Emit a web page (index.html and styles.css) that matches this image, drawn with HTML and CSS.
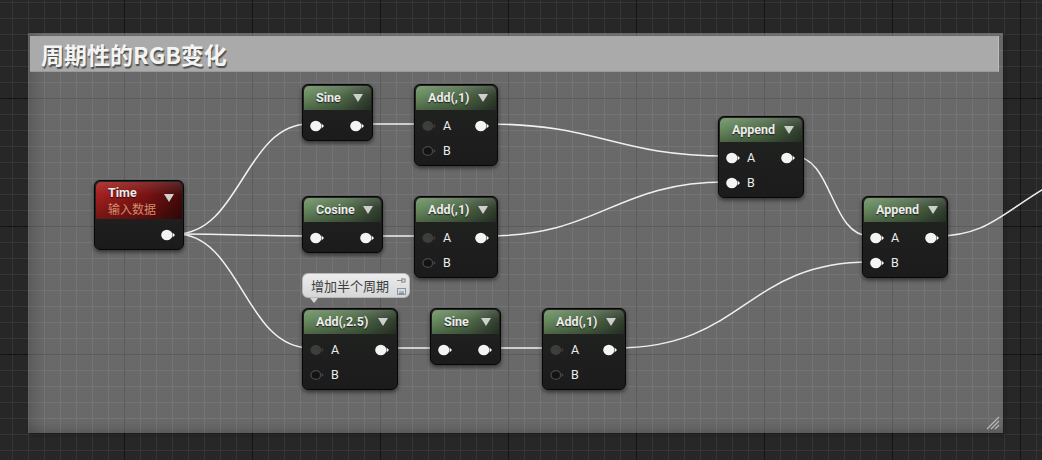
FILE: index.html
```html
<!DOCTYPE html>
<html lang="zh">
<head>
    <meta charset="UTF-8">
    <title>Material Graph</title>
    <link rel="stylesheet" href="styles.css">
</head>
<body>
    <svg class="defs" width="0" height="0">
        <symbol id="pin-on" viewBox="0 0 14 12">
            <ellipse cx="5.8" cy="6" rx="5.6" ry="5.2" fill="#f4f4f4"/>
            <path d="M11.6 3.4 L14 6 L11.6 8.6 Z" fill="#f4f4f4"/>
        </symbol>
        <symbol id="pin-dim" viewBox="0 0 14 12">
            <ellipse cx="5.8" cy="6" rx="5.4" ry="5" fill="#3c3d3c"/>
            <path d="M11.6 3.6 L13.8 6 L11.6 8.4 Z" fill="#3c3d3c"/>
        </symbol>
        <symbol id="pin-off" viewBox="0 0 14 12">
            <ellipse cx="5.8" cy="6" rx="4.8" ry="4.4" fill="#121312" stroke="#474847" stroke-width="1.3"/>
            <path d="M11.6 3.9 L13.6 6 L11.6 8.1 Z" fill="#474847"/>
        </symbol>
    </svg>

    <div class="graph">
        <div class="comment">
            <div class="comment-title">周期性的RGB变化</div>
            <svg class="grip" width="14" height="14" viewBox="0 0 14 14">
                <path d="M1 13 L13 1 M5 13 L13 5 M9 13 L13 9" stroke="#b8b8b8" stroke-width="1.2"/>
            </svg>
        </div>

        <svg class="wires" width="1042" height="460" viewBox="0 0 1042 460">
            <path d="M176 234 C240 234, 245 124, 309 124"/>
            <path d="M176 234 C240 234, 245 236, 309 236"/>
            <path d="M176 234 C240 234, 245 348, 310 348"/>
            <path d="M362 124 L422 124"/>
            <path d="M488 124 C600 124, 615 156, 726 156"/>
            <path d="M373 236 L422 236"/>
            <path d="M488 236 C600 236, 615 182, 726 182"/>
            <path d="M793 156 C833 156, 830 236, 870 236"/>
            <path d="M387 348 L437 348"/>
            <path d="M491 348 L550 348"/>
            <path d="M616 348 C745 348, 745 262, 870 262"/>
            <path d="M937 236 C985 236, 1000 215, 1045 188"/>
        </svg>

        <div class="node n-time">
            <div class="node-head head-red">
                <div class="head-text">
                    <span class="node-title">Time</span>
                    <span class="node-sub">输入数据</span>
                </div>
                <span class="caret"></span>
            </div>
            <div class="node-body">
                <div class="pin-row row-end">
                    <svg class="pin"><use href="#pin-on"/></svg>
                </div>
            </div>
        </div>

        <div class="node n-sine1">
            <div class="node-head"><span class="node-title">Sine</span><span class="caret"></span></div>
            <div class="node-body">
                <div class="pin-row">
                    <svg class="pin"><use href="#pin-on"/></svg>
                    <svg class="pin"><use href="#pin-on"/></svg>
                </div>
            </div>
        </div>

        <div class="node n-add1">
            <div class="node-head"><span class="node-title">Add(,1)</span><span class="caret"></span></div>
            <div class="node-body">
                <div class="pin-row">
                    <span class="pin-in"><svg class="pin"><use href="#pin-dim"/></svg>A</span>
                    <svg class="pin"><use href="#pin-on"/></svg>
                </div>
                <div class="pin-row">
                    <span class="pin-in"><svg class="pin"><use href="#pin-off"/></svg>B</span>
                </div>
            </div>
        </div>

        <div class="node n-append1">
            <div class="node-head"><span class="node-title">Append</span><span class="caret"></span></div>
            <div class="node-body">
                <div class="pin-row">
                    <span class="pin-in"><svg class="pin"><use href="#pin-on"/></svg>A</span>
                    <svg class="pin"><use href="#pin-on"/></svg>
                </div>
                <div class="pin-row">
                    <span class="pin-in"><svg class="pin"><use href="#pin-on"/></svg>B</span>
                </div>
            </div>
        </div>

        <div class="node n-cosine">
            <div class="node-head"><span class="node-title">Cosine</span><span class="caret"></span></div>
            <div class="node-body">
                <div class="pin-row">
                    <svg class="pin"><use href="#pin-on"/></svg>
                    <svg class="pin"><use href="#pin-on"/></svg>
                </div>
            </div>
        </div>

        <div class="node n-add2">
            <div class="node-head"><span class="node-title">Add(,1)</span><span class="caret"></span></div>
            <div class="node-body">
                <div class="pin-row">
                    <span class="pin-in"><svg class="pin"><use href="#pin-dim"/></svg>A</span>
                    <svg class="pin"><use href="#pin-on"/></svg>
                </div>
                <div class="pin-row">
                    <span class="pin-in"><svg class="pin"><use href="#pin-off"/></svg>B</span>
                </div>
            </div>
        </div>

        <div class="node n-append2">
            <div class="node-head"><span class="node-title">Append</span><span class="caret"></span></div>
            <div class="node-body">
                <div class="pin-row">
                    <span class="pin-in"><svg class="pin"><use href="#pin-on"/></svg>A</span>
                    <svg class="pin"><use href="#pin-on"/></svg>
                </div>
                <div class="pin-row">
                    <span class="pin-in"><svg class="pin"><use href="#pin-on"/></svg>B</span>
                </div>
            </div>
        </div>

        <div class="bubble">
            增加半个周期
            <svg class="bubble-pin" width="9" height="7" viewBox="0 0 9 7">
                <path d="M0 3.5 H5 M5 1 V6 M5 2 H8 V5 H5" stroke="#8c8c8c" stroke-width="1.2" fill="none"/>
            </svg>
            <svg class="bubble-icon" width="9" height="7" viewBox="0 0 9 7">
                <rect x="0.5" y="0.5" width="8" height="6" fill="#d8dde4" stroke="#8a96a6"/>
                <path d="M2 4 H7 M2 5.5 H7" stroke="#7d8a9b"/>
            </svg>
        </div>

        <div class="node n-add25">
            <div class="node-head"><span class="node-title">Add(,2.5)</span><span class="caret"></span></div>
            <div class="node-body">
                <div class="pin-row">
                    <span class="pin-in"><svg class="pin"><use href="#pin-dim"/></svg>A</span>
                    <svg class="pin"><use href="#pin-on"/></svg>
                </div>
                <div class="pin-row">
                    <span class="pin-in"><svg class="pin"><use href="#pin-off"/></svg>B</span>
                </div>
            </div>
        </div>

        <div class="node n-sine2">
            <div class="node-head"><span class="node-title">Sine</span><span class="caret"></span></div>
            <div class="node-body">
                <div class="pin-row">
                    <svg class="pin"><use href="#pin-on"/></svg>
                    <svg class="pin"><use href="#pin-on"/></svg>
                </div>
            </div>
        </div>

        <div class="node n-add3">
            <div class="node-head"><span class="node-title">Add(,1)</span><span class="caret"></span></div>
            <div class="node-body">
                <div class="pin-row">
                    <span class="pin-in"><svg class="pin"><use href="#pin-dim"/></svg>A</span>
                    <svg class="pin"><use href="#pin-on"/></svg>
                </div>
                <div class="pin-row">
                    <span class="pin-in"><svg class="pin"><use href="#pin-off"/></svg>B</span>
                </div>
            </div>
        </div>
    </div>
</body>
</html>
```

FILE: styles.css
```css
* {
    margin: 0;
    padding: 0;
    box-sizing: border-box;
}

body {
    background-color: #262626;
    font-family: Roboto, "Noto Sans CJK SC", sans-serif;
    color: #e8e8e8;
}

.defs {
    position: absolute;
    width: 0;
    height: 0;
}

/* canvas grid: minor every 16px, major every 128px */
.graph {
    position: relative;
    width: 1042px;
    height: 460px;
    overflow: hidden;
    background-color: #272727;
    background-image:
        linear-gradient(#141414 1px, transparent 1px),
        linear-gradient(90deg, #141414 1px, transparent 1px),
        linear-gradient(#363636 1px, transparent 1px),
        linear-gradient(90deg, #363636 1px, transparent 1px);
    background-size: 128px 128px, 128px 128px, 16px 16px, 16px 16px;
    background-position: 124px 98px;
}

/* comment box */
.comment {
    position: absolute;
    left: 28px;
    top: 33px;
    width: 975px;
    height: 400px;
    background-color: rgba(255, 255, 255, 0.31);
    box-shadow:
        inset 14px 0 14px -8px rgba(0, 0, 0, 0.16),
        inset 0 -10px 10px -6px rgba(0, 0, 0, 0.14),
        2px 2px 3px rgba(0, 0, 0, 0.35);
}

.comment-title {
    margin: 3px 4px 0 2px;
    height: 36px;
    line-height: 36px;
    padding-left: 11px;
    background-color: #aaaaaa;
    border-right: 1px solid #bdbdbd;
    border-bottom: 1px solid #9a9a9a;
    color: #f4f4f4;
    font-family: "Noto Sans CJK SC", sans-serif;
    font-size: 23px;
    font-weight: 700;
    text-shadow: 1px 2px 1px rgba(0, 0, 0, 0.55);
}

.grip {
    position: absolute;
    right: 3px;
    bottom: 3px;
}

.wires {
    position: absolute;
    left: 0;
    top: 0;
}

.wires path {
    fill: none;
    stroke: #f0f0f0;
    stroke-width: 1.5;
}

/* nodes */
.node {
    position: absolute;
    background: linear-gradient(#222422, #1a1b1a);
    border: 1px solid #070707;
    border-radius: 6px;
    box-shadow: 0 2px 4px rgba(0, 0, 0, 0.55);
    overflow: hidden;
}

.node-head {
    display: flex;
    align-items: center;
    justify-content: space-between;
    height: 24px;
    padding: 0 8px 0 12px;
    margin: 1px 1px 0 1px;
    border-radius: 5px 5px 0 0;
    background:
        linear-gradient(rgba(255, 255, 255, 0.14), rgba(255, 255, 255, 0) 40%, rgba(0, 0, 0, 0.28)),
        linear-gradient(90deg, #6c8e62, #516d4b 55%, #323f2f);
}

.head-red {
    height: 37px;
    align-items: flex-start;
    padding-top: 3px;
    background:
        linear-gradient(rgba(255, 255, 255, 0.12), rgba(255, 255, 255, 0) 35%, rgba(0, 0, 0, 0.3)),
        linear-gradient(90deg, #a51f1f, #7e1313 55%, #420a0a);
}

.head-text {
    display: flex;
    flex-direction: column;
}

.node-title {
    font-size: 12.5px;
    font-weight: 700;
    color: #ececec;
    text-shadow: 0 1px 1px rgba(0, 0, 0, 0.7);
    line-height: 16px;
}

.node-sub {
    font-size: 12px;
    color: #d38c6b;
    line-height: 18px;
}

.caret {
    width: 0;
    height: 0;
    border-left: 5.5px solid transparent;
    border-right: 5.5px solid transparent;
    border-top: 8px solid #cfcfcf;
}

.head-red .caret {
    margin-top: 9px;
}

.node-body {
    padding: 3px 8px 2px 7px;
}

.pin-row {
    display: flex;
    align-items: center;
    justify-content: space-between;
    height: 25px;
}

.row-end {
    justify-content: flex-end;
}

.pin {
    width: 14px;
    height: 12px;
    flex: none;
}

.pin-in {
    display: flex;
    align-items: center;
    gap: 7px;
    font-size: 12.5px;
    color: #ececec;
}

.n-time    { left: 94px;  top: 180px; width: 90px; }
.n-sine1   { left: 302px; top: 84px;  width: 71px; }
.n-add1    { left: 414px; top: 84px;  width: 84px; }
.n-append1 { left: 718px; top: 116px; width: 86px; }
.n-cosine  { left: 302px; top: 196px; width: 81px; }
.n-add2    { left: 414px; top: 196px; width: 84px; }
.n-append2 { left: 862px; top: 196px; width: 86px; }
.n-add25   { left: 302px; top: 308px; width: 96px; }
.n-sine2   { left: 430px; top: 308px; width: 71px; }
.n-add3    { left: 542px; top: 308px; width: 84px; }

/* comment bubble over Add(,2.5) */
.bubble {
    position: absolute;
    left: 302px;
    top: 273px;
    width: 108px;
    height: 25px;
    padding-left: 8px;
    line-height: 24px;
    font-family: "Noto Sans CJK SC", sans-serif;
    font-size: 13px;
    color: #3d3d3d;
    background: linear-gradient(#ececec, #d6d6d6);
    border: 1px solid #b9b9b9;
    border-radius: 6px;
}

.bubble::after {
    content: "";
    position: absolute;
    left: 7px;
    bottom: -6px;
    border-left: 4px solid transparent;
    border-right: 4px solid transparent;
    border-top: 5px solid #d6d6d6;
}

.bubble-pin {
    position: absolute;
    right: 3px;
    top: 3px;
}

.bubble-icon {
    position: absolute;
    right: 3px;
    bottom: 2px;
}
```
